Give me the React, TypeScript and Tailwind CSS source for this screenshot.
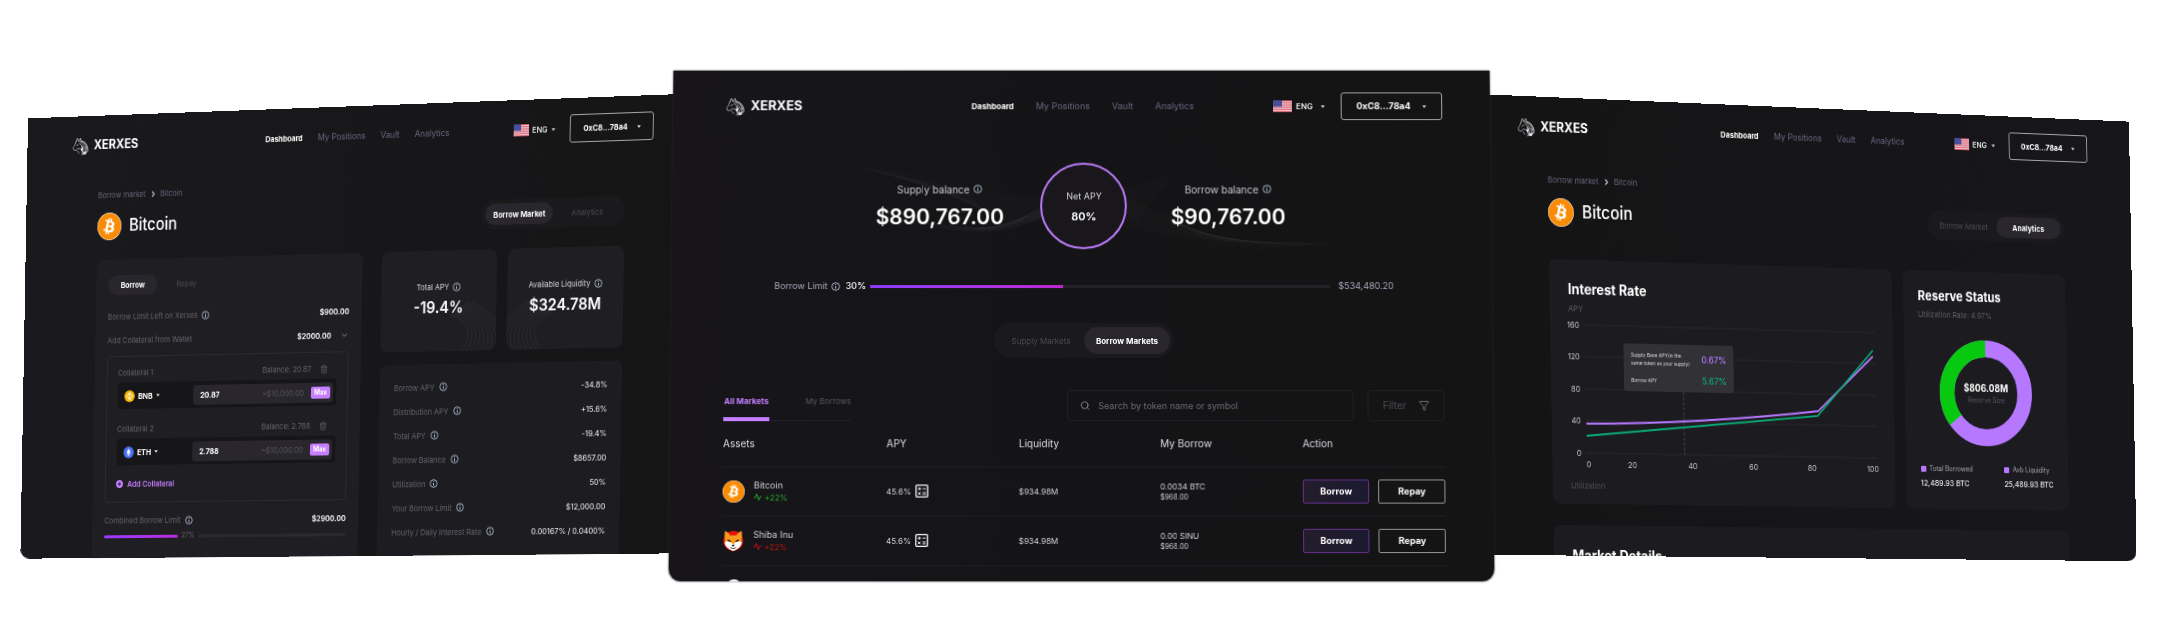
import type { ReactNode } from 'react';
import { ChevronDown, ChevronRight, Filter, Search, Trash2 } from 'lucide-react';
import { FaBitcoin, FaEthereum } from 'react-icons/fa';
import { SiBinance } from 'react-icons/si';

function HorseLogo() {
  return (
    <svg viewBox="0 0 40 38" className="h-[19px] w-5 shrink-0" fill="none" stroke="#c9c9ce" strokeLinecap="round">
      <path d="M8 10 5 17 2 21l1 5 5 1 5-4 5 1" strokeWidth="1.4" />
      <path d="m8 10 3-8 3 6 5-6 1 6c7 1 12 5 14 10 2 4 3 8 2 12" strokeWidth="1.6" />
      <path d="M14 8c8 3 12 7 13 13M19 8c8 3 13 8 13 16M17 13c5 3 8 7 8 12M14 15l-4 2M12 28l4 5M20 24c4 3 4 7 2 12M24 22c4 4 4 8 1 14M28 21c4 4 4 9 1 14M32 21c3 4 3 8 1 12M22 9c8 2 12 8 13 15" strokeWidth="1.5" />
      <path d="M20 17c4 3 6 8 3 14l-4-6 3-3Z" fill="#f1f1f4" stroke="none" />
      <path d="M25 29c3 2 6 2 9-1l-3 8h-6Z" fill="#e0e0e4" stroke="none" />
    </svg>
  );
}

function Flag({ size }: { size: string }) {
  return (
    <svg viewBox="0 0 19 13" className={size} preserveAspectRatio="none" aria-hidden="true">
      <rect width="19" height="13" fill="#f3e9ec" />
      {[0, 2, 4, 6, 8, 10, 12].map((y) => (
        <rect key={y} y={y} width="19" height="1" fill="#d3455b" />
      ))}
      <rect width="9" height="7" fill="#4a4f9c" />
    </svg>
  );
}

function Caret() {
  return (
    <svg viewBox="0 0 6 4" className="h-[3px] w-1 shrink-0" aria-hidden="true">
      <path d="M0 0h6L3 4Z" fill="#e5e5ea" />
    </svg>
  );
}

function InfoIcon() {
  return (
    <svg viewBox="0 0 9 9" className="size-[9px] shrink-0" fill="none" stroke="#b9c6dc" aria-hidden="true">
      <circle cx="4.5" cy="4.5" r="3.8" strokeWidth=".9" />
      <path d="M4.5 4v2.6M4.5 2.2v.9" strokeWidth="1" />
    </svg>
  );
}

function BitcoinCoin({ large = false }: { large?: boolean }) {
  return (
    <span className={`grid shrink-0 place-items-center rounded-full bg-white ${large ? 'size-7' : 'size-[22px]'}`}>
      <FaBitcoin className="size-full text-[#fa8b05]" />
    </span>
  );
}

function ShibaCoin() {
  return (
    <svg viewBox="0 0 40 40" className="size-[22px] shrink-0">
      <circle cx="20" cy="20" r="18" fill="#e8120c" />
      <path d="M5 2c5 2 8 5 9 8h12c1-3 4-6 9-8 1 6 1 12 0 17 2 6-3 15-15 19C8 34 3 25 5 19 4 13 4 7 5 2Z" fill="#f79a1e" />
      <path d="M5 22c5-3 9-1 15 4 6-5 10-7 15-4 1 7-6 13-15 16C11 35 4 29 5 22Z" fill="#fff" />
      <path d="M10 17l6 3-1 2-5-2ZM30 17l-6 3 1 2 5-2ZM17 27h6l-3 4Z" fill="#17131a" />
      <path d="M15 32q5 4 10 0" fill="none" stroke="#17131a" strokeWidth="1.4" />
    </svg>
  );
}

function Calculator() {
  return (
    <svg viewBox="0 0 13 13" className="size-[13px]" fill="none" stroke="#f2f2f5" strokeWidth="1" aria-hidden="true">
      <rect x=".7" y=".7" width="11.6" height="11.6" rx="1" strokeWidth="1.3" />
      <path d="M2.7 4.2h3M4.2 2.7v3M7.5 4.2h3M2.8 7.6l2.6 2.6M5.4 7.6l-2.6 2.6M7.5 8h3M7.5 9.9h3" />
    </svg>
  );
}

function Header({ compact = false }: { compact?: boolean }) {
  return (
    <header className="flex h-7 items-center">
      <a href="#home" className={`flex items-center gap-[5px] text-[13px] font-bold text-white ${compact ? 'w-[224px]' : 'w-[247px]'}`}>
        <HorseLogo />
        XERXES
      </a>
      <nav className={`flex flex-1 text-[9px] whitespace-nowrap text-[#6d6482] ${compact ? 'gap-[17px]' : 'gap-[22px]'}`}>
        <a href="#dashboard" className="text-[8px] leading-[14px] font-bold text-white">Dashboard</a>
        <a href="#positions">My Positions</a>
        <a href="#vault">Vault</a>
        <a href="#analytics">Analytics</a>
      </nav>
      <button className="mr-4 flex items-center gap-1 text-[8px] font-medium text-white">
        <Flag size={compact ? 'h-3 w-[17px]' : 'h-3 w-[19px]'} />
        ENG
        <span className={compact ? 'ml-px' : 'ml-1'}><Caret /></span>
      </button>
      <button
        className={`flex h-7 items-center justify-center rounded-[3px] border border-[#a5a5ab] font-bold text-white ${
          compact ? 'w-[92px] gap-[10px] text-[8px]' : 'w-[102px] gap-3 text-[9px]'
        }`}
      >
        0xC8...78a4
        <Caret />
      </button>
    </header>
  );
}

function Switcher({ items, active, size }: { items: string[]; active: number; size: string }) {
  return (
    <div className={`flex items-center rounded-full bg-[#1a191c] p-1 text-[8px] ${size}`}>
      {items.map((item, i) => (
        <button
          key={item}
          className={
            i === active
              ? 'h-full flex-1 rounded-full bg-[#29272d] font-bold whitespace-nowrap text-white'
              : 'h-full flex-1 rounded-full whitespace-nowrap text-[#4c4a52]'
          }
        >
          {item}
        </button>
      ))}
    </div>
  );
}

function AssetHeading({ active }: { active: number }) {
  return (
    <>
      <div className="mt-8 flex h-[10px] items-center gap-1 text-[8px] text-[#6a6479]">
        <a href="#markets">Borrow market</a>
        <ChevronRight className="size-[9px] text-[#c9c6d2]" strokeWidth={3} />
        <span>Bitcoin</span>
      </div>
      <div className="mt-3 flex h-[29px] items-center gap-[9px]">
        <BitcoinCoin large />
        <h2 className="flex-1 text-[17px] font-medium text-white">Bitcoin</h2>
        <Switcher items={['Borrow Market', 'Analytics']} active={active} size="h-[29px] w-[158px]" />
      </div>
    </>
  );
}

function Collateral({ name, icon, token, amount }: { name: string; icon: ReactNode; token: string; amount: string }) {
  return (
    <div>
      <div className="flex h-3 items-center text-[8px] text-[#65636c]">
        <span className="flex-1">{name}</span>
        <span>Balance: {amount}</span>
        <button aria-label={`Remove ${name}`} className="mx-[10px]"><Trash2 className="size-[9px]" /></button>
      </div>
      <div className="mt-1 flex h-[27px] items-center rounded-[4px] bg-[#161518] pr-1 pl-2">
        <button className="flex flex-1 items-center gap-1 text-[8px] font-bold text-white">
          {icon}
          {token}
          <Caret />
        </button>
        <div className="flex h-5 w-[160px] items-center rounded-[3px] bg-[#29272d] pr-[3px] pl-2">
          <input
            aria-label={`${name} amount`}
            defaultValue={amount}
            className="w-0 flex-1 bg-transparent text-[8px] font-bold text-white outline-none"
          />
          <span className="mr-2 text-[8px] text-[#55525c]">~$10,000.00</span>
          <button className="h-3 w-[22px] rounded-[2px] bg-[#c67fff] text-[7px] leading-3 font-bold text-white">Max</button>
        </div>
      </div>
    </div>
  );
}

const arcs = [0, 1, 2, 3, 4, 5, 6, 7, 8, 9];

function Ripples({ flip = false }: { flip?: boolean }) {
  return (
    <svg viewBox="0 0 126 100" preserveAspectRatio="none" className={`absolute inset-0 size-full ${flip ? '-scale-x-100' : ''}`} fill="none" stroke="#3c3a42" strokeWidth=".5">
      {arcs.map((i) => (
        <path key={i} d={`M${76 + i * 2} ${66 - i * 1.6}C${90 + i * 4} ${66 - i} ${106 + i * 4} ${80 + i} ${88 + i * 5} 101`} />
      ))}
    </svg>
  );
}

function StatCard({ label, value, flip }: { label: string; value: string; flip?: boolean }) {
  return (
    <div className="relative flex h-[100px] flex-1 flex-col items-center overflow-hidden rounded-lg bg-[#1f1e22] pt-[30px]">
      <Ripples flip={flip} />
      <p className="relative flex h-3 items-center gap-1 text-[8px] whitespace-nowrap text-[#d5d4da]">
        {label} <InfoIcon />
      </p>
      <p className="relative mt-1 text-[16px] leading-5 font-semibold text-white">{value}</p>
    </div>
  );
}

const details = [
  ['Borrow APY', '-34.8%'],
  ['Distribution APY', '+15.6%'],
  ['Total APY', '-19.4%'],
  ['Borrow Balance', '$8657.00'],
  ['Utilization', '50%'],
  ['Your Borrow Limit', '$12,000.00'],
  ['Hourly / Daily Interest Rate', '0.00167% / 0.0400%'],
];

function BorrowPanel() {
  return (
    <section className="-mr-[68px] mt-[37px] h-[450px] min-w-0 flex-[760] [transform:skew(-1deg,-1.3deg)_perspective(8200px)_rotateY(-28deg)] overflow-hidden rounded-b-[10px] bg-linear-to-r from-[#1a191d] to-[#151516] pt-4 pr-14 pl-[53px]">
      <Header compact />
      <div className="pr-[30px] pl-[31px]">
        <AssetHeading active={0} />
        <div className="mt-5 flex items-start gap-[22px]">
          <div className="h-[330px] w-[306px] rounded-lg bg-[#1f1e22] px-[14px] pt-4">
            <div className="flex h-5 text-[8px]">
              <button className="w-[57px] rounded-full bg-[#29272d] font-bold text-white">Borrow</button>
              <button className="w-[68px] text-[#4c4a52]">Repay</button>
            </div>
            <div className="mt-4 flex h-3 items-center gap-[5px] text-[8px] text-[#65636c]">
              Borrow Limit Left on Xerxes <InfoIcon />
              <span className="ml-auto font-semibold text-white">$900.00</span>
            </div>
            <div className="mt-3 flex h-3 items-center gap-[10px] text-[8px] text-[#65636c]">
              <span className="flex-1">Add Collateral from Wallet</span>
              <span className="font-semibold text-white">$2000.00</span>
              <ChevronDown className="size-[10px] text-[#9a98a3]" />
            </div>
            <div className="mt-[10px] rounded-[4px] border border-[#2d2b31] px-3 pt-[10px] pb-3">
              <Collateral
                name="Collateral 1"
                token="BNB"
                amount="20.87"
                icon={<span className="grid size-3 place-items-center rounded-full bg-[#f5b90c]"><SiBinance className="size-2 text-white" /></span>}
              />
              <div className="mt-[14px]">
                <Collateral
                  name="Collateral 2"
                  token="ETH"
                  amount="2.788"
                  icon={<span className="grid size-3 place-items-center rounded-full bg-[#4a71f0]"><FaEthereum className="size-2 text-white" /></span>}
                />
              </div>
              <button className="mt-[13px] flex h-3 items-center gap-[5px] text-[8px] font-semibold text-[#c67fff]">
                <svg viewBox="0 0 8 8" className="size-2" aria-hidden="true">
                  <circle cx="4" cy="4" r="4" fill="#c67fff" />
                  <path d="M4 2v4M2 4h4" stroke="#1f1e22" />
                </svg>
                Add Collateral
              </button>
            </div>
            <div className="mt-3 flex h-3 items-center gap-[5px] text-[8px] text-[#65636c]">
              Combined Borrow Limit <InfoIcon />
              <span className="ml-auto font-semibold text-white">$2900.00</span>
            </div>
            <div className="mt-1 flex h-3 items-center gap-1 text-[7px] text-[#65636c]">
              <span className="h-[3px] w-[86px] rounded-full bg-linear-to-r from-[#9b3bff] to-[#b72be0]" />
              27%
              <span className="h-[3px] flex-1 rounded-full bg-[#2a292e]" />
            </div>
          </div>
          <div className="min-w-0 flex-1">
            <div className="flex gap-3">
              <StatCard label="Total APY" value="-19.4%" />
              <StatCard label="Available Liquidity" value="$324.78M" flip />
            </div>
            <dl className="mt-[13px] flex h-[220px] flex-col gap-[11px] rounded-lg bg-[#1d1c20] px-4 pt-4 text-[8px]">
              {details.map(([label, value]) => (
                <div key={label} className="flex h-[13px] items-center">
                  <dt className="flex flex-1 items-center gap-[5px] text-[#65636c]">{label} <InfoIcon /></dt>
                  <dd className="font-medium text-[#dcdbe0]">{value}</dd>
                </div>
              ))}
            </dl>
          </div>
        </div>
      </div>
    </section>
  );
}

const strands = [0, 1, 2, 3, 4, 5, 6, 7, 8, 9, 10, 11];

function Mesh() {
  return (
    <svg viewBox="0 0 620 100" className="absolute inset-x-0 top-0 mx-auto h-[100px] w-[620px]" fill="none" stroke="#ffffff" strokeOpacity=".06" strokeWidth=".6">
      {strands.map((i) => (
        <g key={i}>
          <path d={`M${80 + i * 9} ${4 + i}C${150 + i * 6} ${20 + i * 4} 230 ${40 + i * 2} 310 ${34 + i * 2}`} />
          <path d={`M${150 + i * 8} ${60 + i}C${210 + i * 3} ${80 - i * 2} 270 ${66 - i * 3} 310 ${24 + i * 2}`} />
          <path d={`M310 ${34 + i * 2}C340 ${38 + i} 370 ${20 + i * 4} ${398 - i * 3} ${13 + i * 4}`} />
          <path d={`M310 ${24 + i * 3}C360 ${40 + i * 2} 400 ${50 + i * 3} ${450 + i * 10} ${92 - i}`} />
        </g>
      ))}
    </svg>
  );
}

function Balance({ label, value }: { label: string; value: string }) {
  return (
    <div className="relative flex w-[130px] flex-col items-center">
      <p className="flex items-center gap-1 text-[10px] leading-4 text-[#c9c8ce]">
        {label} <InfoIcon />
      </p>
      <p className="mt-[6px] text-[21px] leading-7 font-semibold text-white">{value}</p>
    </div>
  );
}

const rows = [
  { name: 'Bitcoin', coin: <BitcoinCoin />, up: true, borrow: '0.0034 BTC' },
  { name: 'Shiba Inu', coin: <ShibaCoin />, up: false, borrow: '0.00 SINU' },
];

function DashboardPanel() {
  return (
    <section className="relative z-10 h-[511px] min-w-0 flex-[831] [transform:perspective(1500px)_rotateX(2deg)] overflow-hidden rounded-b-[12px] bg-linear-to-r from-[#17151a] via-[#141416] to-[#141415] pt-[22px] pr-12 pl-[53px] shadow-[0_0_2px_#2a2a2e]">
      <Header />
      <div className="relative mt-[43px] flex h-[87px] items-center justify-center gap-9">
        <Mesh />
        <Balance label="Supply balance" value="$890,767.00" />
        <div className="relative flex size-[87px] flex-col items-center justify-center rounded-full border-2 border-[#b678f3] bg-[#19171c]">
          <p className="text-[9px] leading-3 text-[#d5d4da]">Net APY</p>
          <p className="mt-2 text-[11px] leading-3 font-semibold text-white">80%</p>
        </div>
        <Balance label="Borrow balance" value="$90,767.00" />
      </div>
      <div className="mt-[29px] flex h-4 items-center gap-1 pr-[50px] pl-[50px] text-[9px] text-[#a9a6ba]">
        Borrow Limit <InfoIcon />
        <span className="ml-px font-medium text-white">30%</span>
        <span className="flex h-[3px] flex-1 bg-[#242227]">
          <span className="w-[42%] bg-linear-to-r from-[#8d3cff] to-[#c026d3]" />
        </span>
        <span className="ml-1">$534,480.20</span>
      </div>
      <div className="mt-[29px] flex justify-center">
        <Switcher items={['Supply Markets', 'Borrow Markets']} active={1} size="h-[35px] w-[180px]" />
      </div>
      <div className="mt-8 flex h-[31px] items-stretch gap-[14px]">
        <div className="mr-auto flex items-end self-end text-[8px]">
          <button className="h-7 w-[46px] border-b-4 border-[#c67fff] pb-2 font-bold whitespace-nowrap text-[#c67fff]">All Markets</button>
          <button className="h-7 border-b border-[#222126] pb-[11px] pl-9 text-[#5a5862]">My Borrows</button>
        </div>
        <label className="flex w-[286px] items-center gap-2 rounded-[4px] border border-[#202024] pl-3">
          <Search className="size-[11px] text-[#8b8a92]" />
          <input
            aria-label="Search by token name or symbol"
            placeholder="Search by token name or symbol"
            className="w-full bg-transparent text-[9px] text-white outline-none placeholder:text-[#6c6b73]"
          />
        </label>
        <button className="flex w-[77px] items-center justify-center gap-3 rounded-[4px] border border-[#202024] text-[10px] text-[#4f4e55]">
          Filter
          <Filter className="size-[11px] text-[#77767e]" />
        </button>
      </div>
      <table className="w-full table-fixed text-left text-[8px] text-[#d0cfd5]">
        <thead>
          <tr className="h-[45px] border-b border-[#1d1f27] text-[10px] text-[#dcdbe0]">
            <th className="w-[163px] font-normal">Assets</th>
            <th className="w-[132px] font-normal">APY</th>
            <th className="w-[141px] font-normal">Liquidity</th>
            <th className="font-normal">My Borrow</th>
            <th className="w-[142px] font-normal">Action</th>
          </tr>
        </thead>
        <tbody>
          {rows.map((row) => (
            <tr key={row.name} className="h-[49px] border-b border-[#1d1f27]">
              <td>
                <div className="flex items-center gap-[9px]">
                  {row.coin}
                  <div>
                    <p className="text-[9px] leading-3">{row.name}</p>
                    <p className={`flex items-center gap-[3px] text-[8px] leading-3 ${row.up ? 'text-[#27a32d]' : 'text-[#b81414]'}`}>
                      <svg viewBox="0 0 16 14" className="h-[7px] w-2" fill="none" stroke="currentColor" strokeWidth="2">
                        <path d="M0 8h3L6 1l4 12 3-7h3" />
                      </svg>
                      +22%
                    </p>
                  </div>
                </div>
              </td>
              <td>
                <div className="flex items-center gap-1">45.6% <Calculator /></div>
              </td>
              <td>$934.98M</td>
              <td>
                <p className="leading-3">{row.borrow}</p>
                <p className="text-[7px] leading-[10px]">$968.00</p>
              </td>
              <td>
                <div className="flex gap-[9px] text-[9px] font-bold text-white">
                  <button className="h-6 flex-1 rounded-[2px] border border-[#63318c] bg-linear-to-r from-[#231c2b] to-[#1b1a30]">Borrow</button>
                  <button className="h-6 flex-1 rounded-[2px] border border-[#94949a]">Repay</button>
                </div>
              </td>
            </tr>
          ))}
        </tbody>
      </table>
      <div className="mt-[13px] ml-1 size-4 rounded-full bg-white" />
    </section>
  );
}

const yTicks: [number, string][] = [[64, '160'], [95, '120'], [127, '80'], [158, '40'], [190, '0']];
const xTicks: [number, string][] = [[39, '0'], [87, '20'], [154, '40'], [222, '60'], [288, '80'], [357, '100']];

function RateChart() {
  return (
    <svg viewBox="0 54 381 156" className="absolute inset-x-0 top-[54px] h-[156px] w-full" fontSize="8" fill="#c4c3c9">
      {yTicks.map(([y, label]) => (
        <g key={label}>
          <line x1="37" x2="362" y1={y} y2={y} stroke="#2a292e" />
          <text x="31" y={y + 3} textAnchor="end">{label}</text>
        </g>
      ))}
      {xTicks.map(([x, label]) => (
        <text key={label} x={x} y="204" textAnchor="middle">{label}</text>
      ))}
      <line x1="145" x2="145" y1="128" y2="190" stroke="#46454c" strokeDasharray="3 2" />
      <path d="M37 161C120 160 220 153 296 144L359 88" fill="none" stroke="#b678ff" strokeWidth="1.8" />
      <path d="M37 173 295 149 359 82" fill="none" stroke="#0bab76" strokeWidth="1.8" />
    </svg>
  );
}

function Legend({ label, value }: { label: string; value: string }) {
  return (
    <div>
      <p className="flex items-center gap-1 text-[7px] leading-3 whitespace-nowrap text-[#a9a8ae]">
        <span className="size-[6px] rounded-[1px] bg-[#b678ff]" />
        {label}
      </p>
      <p className="mt-[2px] text-[8px] leading-3 font-medium whitespace-nowrap text-[#e6e5ea]">{value}</p>
    </div>
  );
}

function AnalyticsPanel() {
  return (
    <section className="-ml-[53px] mt-[39px] h-[450px] min-w-0 flex-[744] [transform:skew(1deg,1.5deg)_perspective(7400px)_rotateY(28deg)] overflow-hidden rounded-b-[10px] bg-linear-to-r from-[#141415] to-[#17161a] px-[50px] pt-4">
      <Header compact />
      <div className="pr-[29px] pl-8">
        <AssetHeading active={1} />
        <div className="mt-8 flex h-[240px] gap-[13px]">
          <div className="relative flex-1 rounded-lg bg-[#1c1b1f] px-5 pt-5">
            <h3 className="text-[14px] leading-[18px] font-bold text-white">Interest Rate</h3>
            <p className="mt-1 text-[8px] leading-3 text-[#5f5d66]">APY</p>
            <RateChart />
            <p className="absolute top-[216px] left-5 text-[8px] leading-3 text-[#4f4e55]">Utilization</p>
            <div className="absolute top-[81px] left-20 flex h-[47px] w-[122px] flex-col justify-between rounded-[3px] bg-[#323136] px-2 py-[7px] text-[5px] leading-2 text-[#d5d4da]">
              <div className="flex items-center justify-between">
                <p className="whitespace-nowrap">Supply Base APY(in the<br />same token as your supply)</p>
                <span className="text-[9px] font-medium text-[#b678ff]">0.67%</span>
              </div>
              <div className="flex items-center justify-between">
                <p>Borrow APY</p>
                <span className="text-[9px] font-medium text-[#0bab76]">5.67%</span>
              </div>
            </div>
          </div>
          <div className="w-[188px] rounded-lg bg-[#1c1b1f] px-[17px] pt-4">
            <h3 className="text-[13px] leading-[18px] font-bold whitespace-nowrap text-white">Reserve Status</h3>
            <p className="mt-1 text-[8px] leading-3 text-[#5f5d66]">Utilization Rate: 4.97%</p>
            <div className="relative mx-auto mt-[19px] grid size-[107px] place-items-center">
              <svg viewBox="0 0 107 107" className="absolute inset-0 size-full -rotate-90" fill="none" strokeWidth="17">
                <circle cx="53.5" cy="53.5" r="45" stroke="#b678ff" />
                <circle cx="53.5" cy="53.5" r="45" stroke="#07c90f" pathLength="100" strokeDasharray="35.5 64.5" strokeDashoffset="35.5" />
              </svg>
              <div className="relative text-center">
                <p className="text-[10px] leading-3 font-bold text-white">$806.08M</p>
                <p className="mt-[2px] text-[7px] leading-[10px] text-[#5a5862]">Reserve Size</p>
              </div>
            </div>
            <div className="mt-[18px] flex justify-between">
              <Legend label="Total Borrowed" value="12,489.93 BTC" />
              <Legend label="Avb Liquidity" value="25,489.93 BTC" />
            </div>
          </div>
        </div>
        <div className="mt-[21px] h-20 rounded-lg bg-[#1c1b1f] px-5 pt-5">
          <h3 className="text-[14px] leading-5 font-bold text-white">Market Details</h3>
        </div>
      </div>
    </section>
  );
}

export default function App() {
  return (
    <div className="overflow-hidden bg-white pt-[69px] pb-[55px] font-['Inter','Liberation_Sans',sans-serif]">
      <main className="-mr-6 -ml-7 flex items-start">
        <BorrowPanel />
        <DashboardPanel />
        <AnalyticsPanel />
      </main>
    </div>
  );
}
